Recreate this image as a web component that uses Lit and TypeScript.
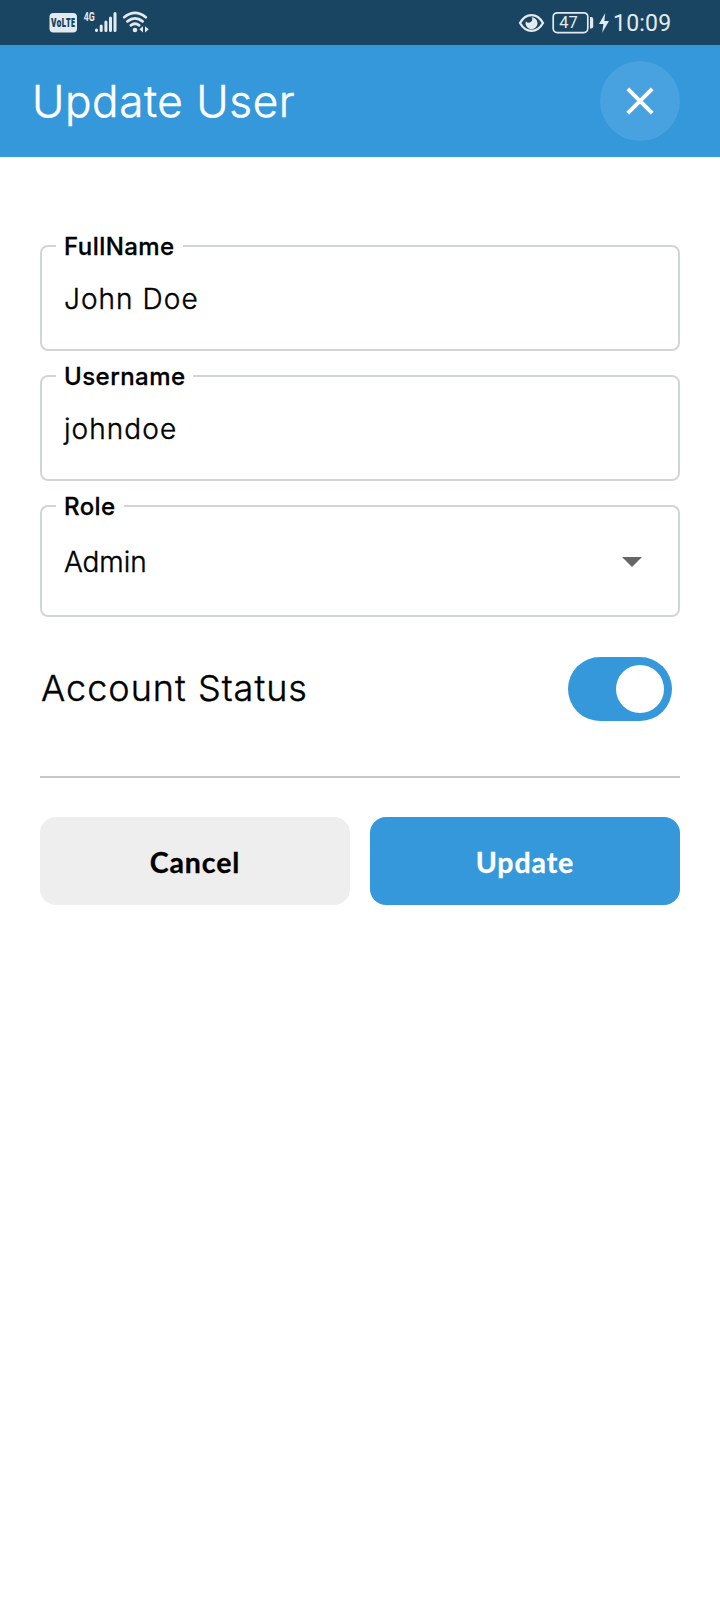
import { LitElement, html, css } from "lit";
import { customElement, property } from "lit/decorators.js";

@customElement("status-bar")
class StatusBar extends LitElement {
  static styles = css`
    :host { display: flex; height: 45px; background: #1a4562; color: #e3eaee; box-sizing: border-box; padding: 0 49px; justify-content: space-between; font-family: Roboto, sans-serif; }
    .group { display: flex; }
    svg { display: block; height: 45px; }
    .clock { font-size: 23px; line-height: 48px; letter-spacing: 0.2px; width: 58px; margin-left: 4px; white-space: nowrap; }
    .badge { font: 800 11.5px "Open Sans", sans-serif; }
    .net { font: 700 12px Roboto, sans-serif; }
    .num { font: 400 17px Roboto, sans-serif; }
  `;
  render() {
    return html`
      <div class="group">
        <svg width="102" height="45" viewBox="49 0 102 45" fill="currentColor">
          <rect x="49.5" y="13" width="27.5" height="19.5" rx="4" />
          <text class="badge" x="51" y="27" fill="#1a4562" textLength="24" lengthAdjust="spacingAndGlyphs">VoLTE</text>
          <text class="net" x="83.7" y="20.7" textLength="11" lengthAdjust="spacingAndGlyphs">4G</text>
          <g stroke="currentColor" stroke-width="3" stroke-linecap="round">
            <path d="M96.5 30v.6M101.2 26v4.6M105.9 22v8.6M110.5 18v12.6M115 13.5v17.1" />
          </g>
          <g fill="none" stroke="currentColor" stroke-width="2.7" stroke-linecap="round">
            <path d="M124.2 17.2Q135 8.6 145.8 17.2M127.4 21.4Q135 15.3 142.6 21.4M130.8 25.3Q135 22.2 139.2 25.3" />
          </g>
          <circle cx="135" cy="30" r="2.3" />
          <path d="M143 26.2v6.2l-3.6-3.1zM145 26.2v6.2l3.8-3.1z" />
        </svg>
      </div>
      <div class="group">
        <svg width="92" height="45" viewBox="517 0 92 45" fill="currentColor">
          <path fill="none" stroke="currentColor" stroke-width="2.3" stroke-linejoin="round" d="M520 23C526 12.5 537 12.5 543 23C537 33.5 526 33.5 520 23Z" />
          <path d="M531.5 17.2a6 6 0 1 1-5.6 4a3.4 3.4 0 0 0 5.6-4z" />
          <rect x="553.2" y="12.8" width="34.6" height="19.8" rx="4" fill="none" stroke="currentColor" stroke-width="1.7" />
          <text class="num" x="559.3" y="28" textLength="18.5" lengthAdjust="spacingAndGlyphs">47</text>
          <path d="M590 17h1.2q2 0 2 2v7.5q0 2-2 2H590z" />
          <path d="M605.2 13L599 24h4.4l-1.2 8.8L609 21h-4.6z" />
        </svg>
        <span class="clock">10:09</span>
      </div>
    `;
  }
}

@customElement("form-field")
class FormField extends LitElement {
  @property() label = "";
  @property() value = "";
  @property({ type: Boolean }) select = false;
  static styles = css`
    :host { display: block; font-family: Inter, sans-serif; }
    .box { position: relative; box-sizing: border-box; height: 106px; border: 2px solid #d1d5db; border-radius: 8px; padding: 0 36px 0 22px; display: flex; align-items: center; justify-content: space-between; }
    .select { height: 112px; padding-top: 2px; }
    .label { position: absolute; left: 14px; top: -16px; padding: 0 8px; background: #fff; font-size: 24px; line-height: 32px; font-weight: 500; letter-spacing: 0.45px; -webkit-text-stroke: 0.3px #000; color: #000; }
    .value { font-size: 28px; line-height: 40px; font-weight: 300; letter-spacing: 1.05px; -webkit-text-stroke: 0.4px #000; color: #000; }
    .select .value { letter-spacing: -0.1px; }
    .raised { padding-top: 2px; }
  `;
  render() {
    return html`
      <div class="box ${this.select ? "select" : ""}">
        <span class="label">${this.label}</span>
        <span class="value ${this.select ? "" : "raised"}">${this.value}</span>
        ${this.select
          ? html`<svg width="20" height="10" viewBox="0 0 20 10"><path d="M0 0h20L10 10z" fill="#666" /></svg>`
          : null}
      </div>
    `;
  }
}

@customElement("app-root")
class AppRoot extends LitElement {
  static styles = css`
    :host { display: block; min-height: 1600px; background: #fff; font-family: Inter, sans-serif; color: #000; }
    .header { display: flex; align-items: center; justify-content: space-between; box-sizing: border-box; height: 112px; padding: 0 40px 0 32px; background: #3498db; color: #fff; }
    .title { font-size: 44px; font-weight: 300; letter-spacing: 0.6px; line-height: 56px; -webkit-text-stroke: 0.5px #fff; }
    .close { width: 80px; height: 80px; border-radius: 50%; background: #48a2df; display: grid; place-items: center; }
    .content { padding: 88px 40px 0; display: flex; flex-direction: column; gap: 24px; }
    .row { display: flex; align-items: center; justify-content: space-between; height: 64px; margin-top: 16px; padding-right: 8px; }
    .status { font-size: 36px; font-weight: 300; letter-spacing: 1px; line-height: 48px; padding: 0 0 2px 1px; -webkit-text-stroke: 0.4px #000; }
    .toggle { box-sizing: border-box; width: 104px; height: 64px; border-radius: 32px; padding: 8px; background: #3498db; display: flex; justify-content: flex-end; }
    .thumb { width: 48px; height: 48px; border-radius: 50%; background: #fff; }
    .divider { height: 2px; background: #cac4d0; margin-top: 31px; }
    .actions { display: grid; grid-template-columns: 1fr 1fr; gap: 20px; margin-top: 15px; }
    .button { height: 88px; box-sizing: border-box; padding-top: 1px; border-radius: 16px; display: grid; place-items: center; font: 700 28.5px/40px Lato, sans-serif; letter-spacing: 0.9px; -webkit-text-stroke: 0.3px currentColor; }
    .cancel { background: #eee; }
    .update { background: #3498db; color: #fff; }
  `;
  render() {
    return html`
      <status-bar></status-bar>
      <div class="header">
        <span class="title">Update User</span>
        <div class="close">
          <svg width="30" height="30" viewBox="0 0 30 30"><path d="M2.8 2.8l24.4 24.4M27.2 2.8l-24.4 24.4" fill="none" stroke="#fff" stroke-width="4" /></svg>
        </div>
      </div>
      <div class="content">
        <form-field label="FullName" value="John Doe"></form-field>
        <form-field label="Username" value="johndoe"></form-field>
        <form-field label="Role" value="Admin" select></form-field>
        <div class="row">
          <span class="status">Account Status</span>
          <div class="toggle"><div class="thumb"></div></div>
        </div>
        <div class="divider"></div>
        <div class="actions">
          <div class="button cancel">Cancel</div>
          <div class="button update">Update</div>
        </div>
      </div>
    `;
  }
}
